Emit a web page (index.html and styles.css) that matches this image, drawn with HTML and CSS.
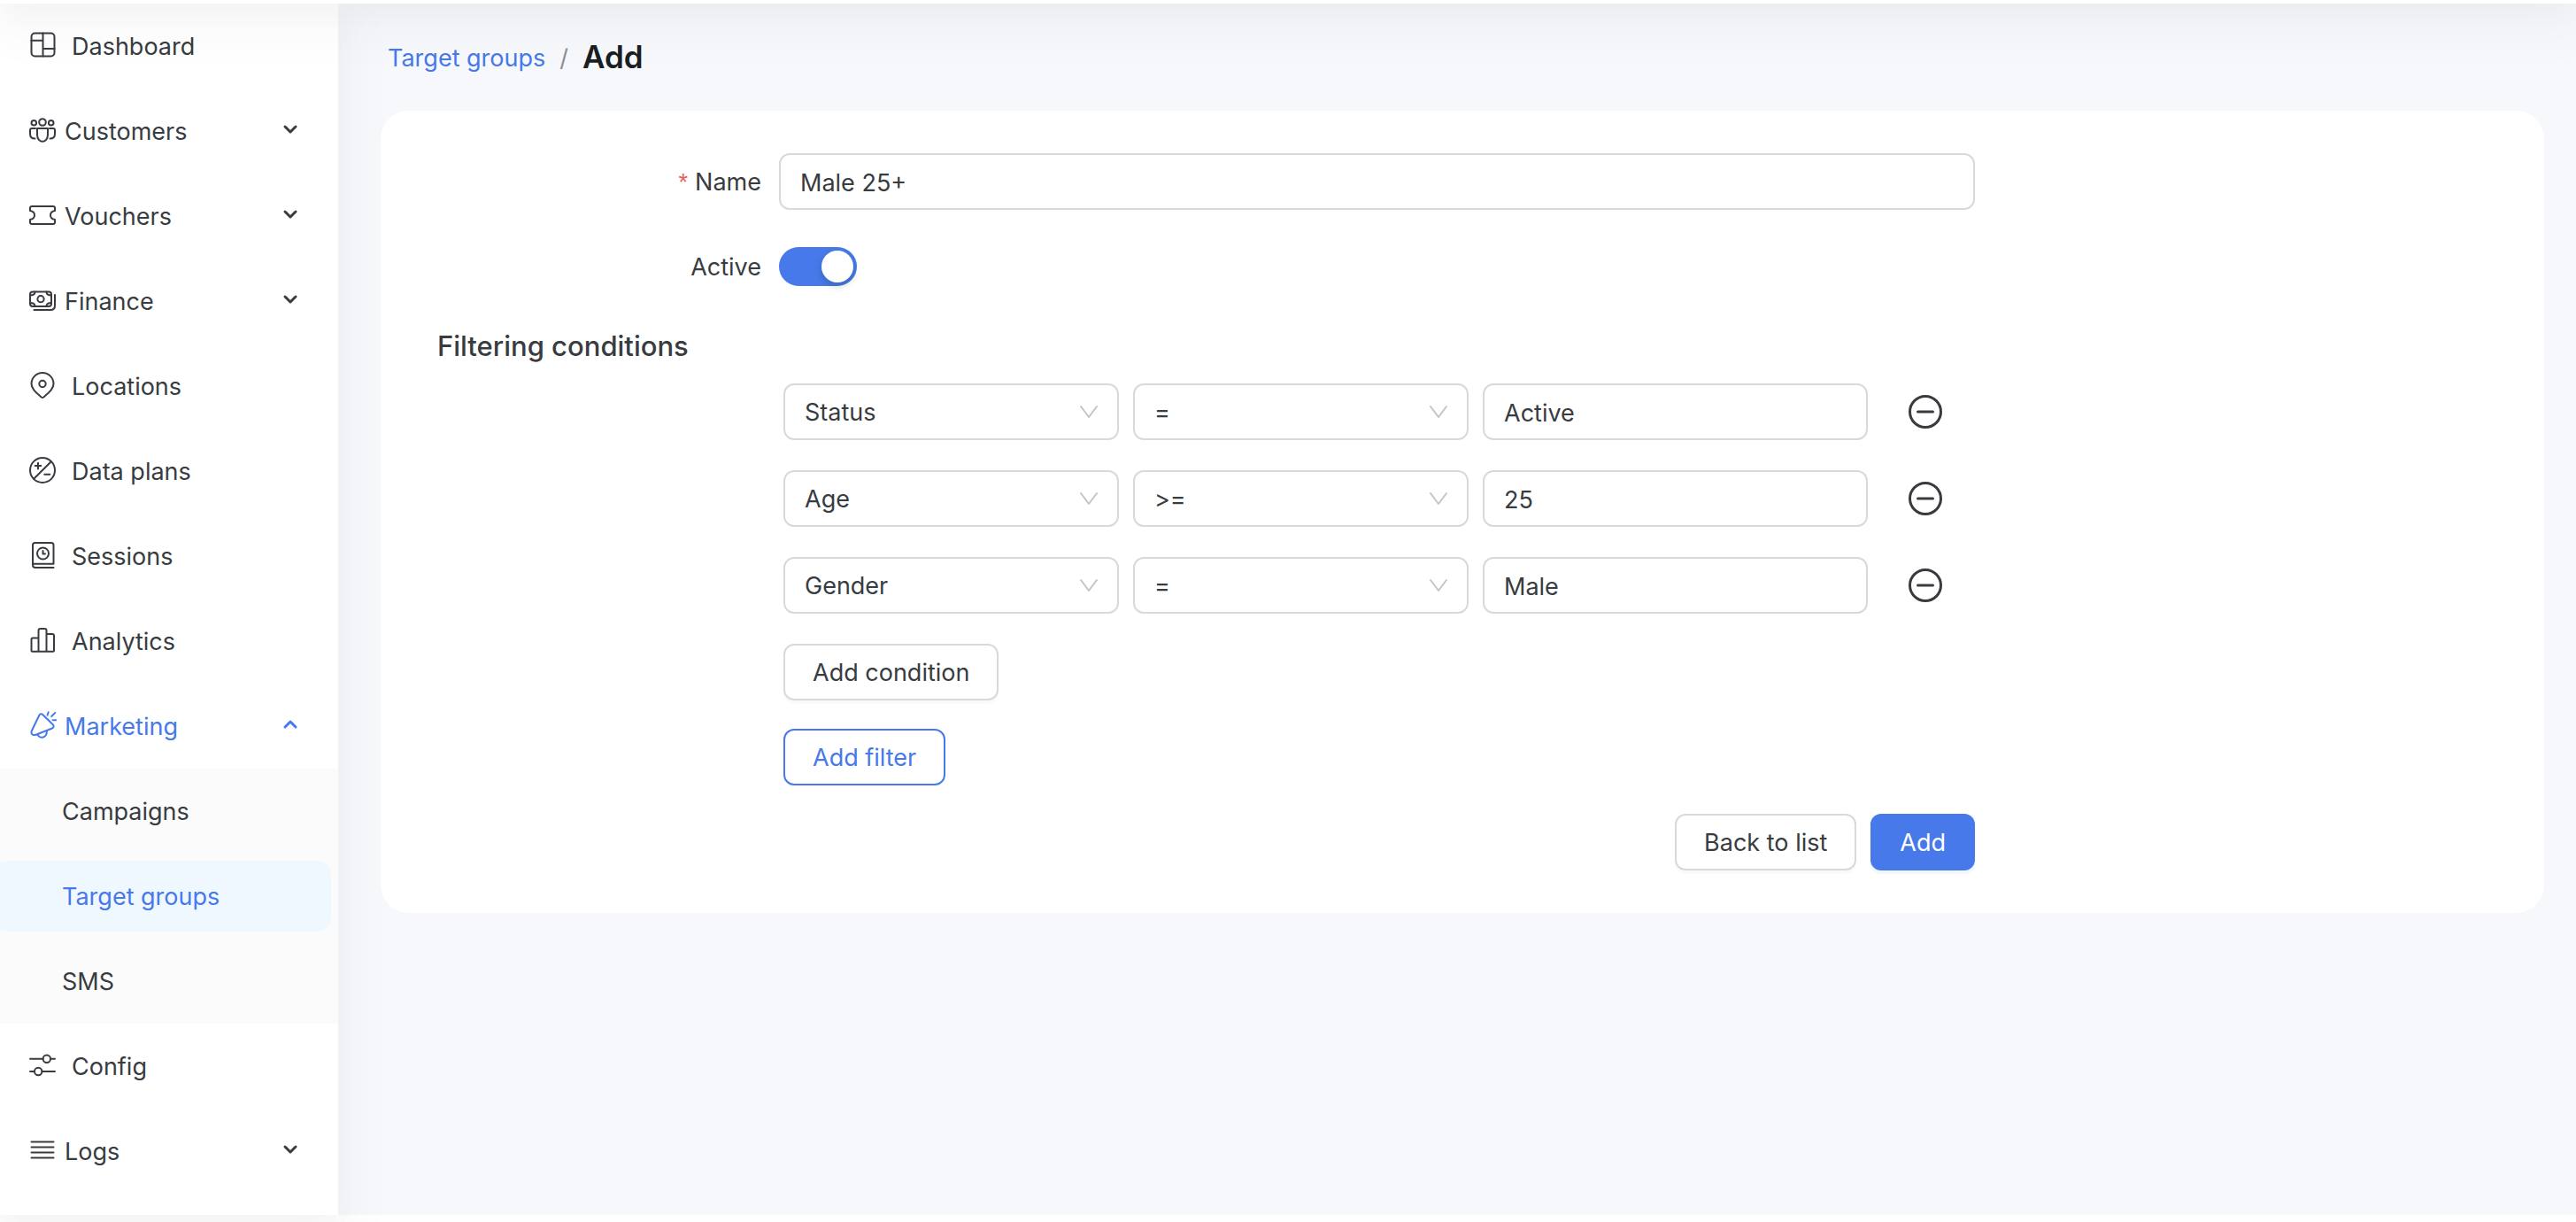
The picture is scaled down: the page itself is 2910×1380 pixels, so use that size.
FILE: index.html
```html
<!DOCTYPE html>
<html lang="en">
<head>
    <meta charset="UTF-8">
    <meta name="viewport" content="width=device-width, initial-scale=1.0">
    <title>Target groups / Add</title>
    <link rel="stylesheet" href="styles.css">
</head>
<body>
    <header class="topbar"></header>

    <div class="layout">
        <nav class="sidebar">
            <a href="#" class="menu-item">
                <svg class="menu-icon" viewBox="0 0 30 30"><rect x="2.5" y="1.5" width="26" height="26" rx="4"/><path d="M15.5 1.5v26M2.5 9.7h13M15.5 19h13"/></svg>
                <span>Dashboard</span>
            </a>
            <button type="button" class="menu-item menu-group">
                <svg class="menu-icon" viewBox="0 0 30 30"><circle cx="15" cy="6" r="3.8"/><circle cx="5.3" cy="6.8" r="2.8"/><circle cx="24.7" cy="6.8" r="2.8"/><path d="M9 13h12v7c0 5-3 7.8-6 7.8S9 25 9 20zM7 13H3q-2 0-2 2v4.5c0 3.5 2 5 5.5 5M23 13h4q2 0 2 2v4.5c0 3.5-2 5-5.5 5"/></svg>
                <span>Customers</span>
                <svg class="chevron" viewBox="0 0 16 10"><path d="M2 2l6 6 6-6"/></svg>
            </button>
            <button type="button" class="menu-item menu-group">
                <svg class="menu-icon" viewBox="0 0 30 30"><path d="M1 7q0-2 2-2h24q2 0 2 2v3c-3 .5-5 2.500-5 5s2 4.500 5 5v3q0 2-2 2H3q-2 0-2-2v-3c3-.5 5-2.500 5-5s-2-4.500-5-5z"/></svg>
                <span>Vouchers</span>
                <svg class="chevron" viewBox="0 0 16 10"><path d="M2 2l6 6 6-6"/></svg>
            </button>
            <button type="button" class="menu-item menu-group">
                <svg class="menu-icon" viewBox="0 0 30 30"><rect x="1" y="5.5" width="24" height="16.5" rx="3"/><circle cx="13" cy="13.7" r="3.6"/><path d="M6.5 5.5q0 4-5.5 4M19.5 5.5q0 4 5.5 4M6.5 22q0-4-5.5-4M19.5 22q0-4 5.5-4M29 9v12q0 5-5 5H5.5"/></svg>
                <span>Finance</span>
                <svg class="chevron" viewBox="0 0 16 10"><path d="M2 2l6 6 6-6"/></svg>
            </button>
            <a href="#" class="menu-item">
                <svg class="menu-icon" viewBox="0 0 30 30"><path d="M27.500 13.500C27.500 20 20 25.500 16.300 28.500q-1.300 1-2.600 0C10 25.500 2.500 20 2.500 13.500a12.500 12.500 0 0 1 25 0z"/><circle cx="15" cy="13.5" r="3.7"/></svg>
                <span>Locations</span>
            </a>
            <a href="#" class="menu-item">
                <svg class="menu-icon" viewBox="0 0 30 30"><circle cx="15" cy="15" r="14"/><path d="M5.200 24.800L24.800 5.200M10 6.800v6.600M6.700 10.100h6.600M17.300 19.700h6"/></svg>
                <span>Data plans</span>
            </a>
            <a href="#" class="menu-item">
                <svg class="menu-icon" viewBox="0 0 30 30"><path d="M27.500 24.700V3.500Q27.500 1 25 1H6.500Q4 1 4 3.500V26q0 3 3 3h20.500M4.500 24.700h23"/><circle cx="15.5" cy="13" r="6.5"/><path d="M15.500 10v3.500h2.500"/></svg>
                <span>Sessions</span>
            </a>
            <a href="#" class="menu-item">
                <svg class="menu-icon" viewBox="0 0 30 30"><path d="M10.500 27.800H3.500q-1 0-1-1V14q0-1.500 1.500-1.500h6.500zM10.500 27.800V4q0-2 2-2h5q2 0 2 2v23.800zM19.500 8H26q2 0 2 2v16.800q0 1-1 1h-7.500"/></svg>
                <span>Analytics</span>
            </a>
            <button type="button" class="menu-item menu-group menu-open">
                <svg class="menu-icon" viewBox="0 0 30 30"><path d="M11.300 3.700q1.800-2.600 4.200-.4L27 14.500q1.600 2.500-1 4L7.500 25.800q-5.500 1.400-5-3.800zM9.800 25.500c1.200 4.800 9.700 5 10.200-3.700M21.700.2l-1.200 3.500M29.300.9l-4.100 4.100M26.600 9.300h3.600"/></svg>
                <span>Marketing</span>
                <svg class="chevron" viewBox="0 0 16 10"><path d="M2 8l6-6 6 6"/></svg>
            </button>
            <div class="submenu">
                <a href="#" class="menu-item">Campaigns</a>
                <a href="#" class="menu-item selected">Target groups</a>
                <a href="#" class="menu-item">SMS</a>
            </div>
            <a href="#" class="menu-item">
                <svg class="menu-icon" viewBox="0 0 30 30"><path d="M1 7.800h14.500M24 7.800h5M1 22h5M14.500 22H29"/><circle cx="19.8" cy="7.8" r="4.2"/><circle cx="10.2" cy="22" r="4.2"/></svg>
                <span>Config</span>
            </a>
            <button type="button" class="menu-item menu-group">
                <svg class="menu-icon" viewBox="0 0 30 30"><path d="M2.500 5.500h25M2.500 11.500h25M2.500 17.500h25M2.500 23.500h25"/></svg>
                <span>Logs</span>
                <svg class="chevron" viewBox="0 0 16 10"><path d="M2 2l6 6 6-6"/></svg>
            </button>
        </nav>

        <main class="content">
            <div class="breadcrumb">
                <a href="#">Target groups</a>
                <span class="separator">/</span>
                <h1>Add</h1>
            </div>

            <form class="card">
                <div class="form-row">
                    <label for="name" class="required">Name</label>
                    <input type="text" id="name" class="control" value="Male 25+">
                </div>
                <div class="form-row">
                    <label for="active">Active</label>
                    <input type="checkbox" id="active" class="switch" checked>
                </div>

                <h2>Filtering conditions</h2>

                <!-- Filter rows -->
                <div class="form-row">
                    <div class="filters">
                        <div class="condition">
                            <div class="select">
                                <select class="control" aria-label="Field"><option>Status</option></select>
                                <svg viewBox="0 0 20 14"><path d="M1 1l9 12 9-12"/></svg>
                            </div>
                            <div class="select">
                                <select class="control" aria-label="Operator"><option>=</option></select>
                                <svg viewBox="0 0 20 14"><path d="M1 1l9 12 9-12"/></svg>
                            </div>
                            <input type="text" class="control" aria-label="Value" value="Active">
                            <button type="button" class="remove" aria-label="Remove condition">
                                <svg viewBox="0 0 38 38"><circle cx="19" cy="19" r="17.5"/><path d="M10.500 19h17"/></svg>
                            </button>
                        </div>
                        <div class="condition">
                            <div class="select">
                                <select class="control" aria-label="Field"><option>Age</option></select>
                                <svg viewBox="0 0 20 14"><path d="M1 1l9 12 9-12"/></svg>
                            </div>
                            <div class="select">
                                <select class="control" aria-label="Operator"><option>&gt;=</option></select>
                                <svg viewBox="0 0 20 14"><path d="M1 1l9 12 9-12"/></svg>
                            </div>
                            <input type="text" class="control" aria-label="Value" value="25">
                            <button type="button" class="remove" aria-label="Remove condition">
                                <svg viewBox="0 0 38 38"><circle cx="19" cy="19" r="17.5"/><path d="M10.500 19h17"/></svg>
                            </button>
                        </div>
                        <div class="condition">
                            <div class="select">
                                <select class="control" aria-label="Field"><option>Gender</option></select>
                                <svg viewBox="0 0 20 14"><path d="M1 1l9 12 9-12"/></svg>
                            </div>
                            <div class="select">
                                <select class="control" aria-label="Operator"><option>=</option></select>
                                <svg viewBox="0 0 20 14"><path d="M1 1l9 12 9-12"/></svg>
                            </div>
                            <input type="text" class="control" aria-label="Value" value="Male">
                            <button type="button" class="remove" aria-label="Remove condition">
                                <svg viewBox="0 0 38 38"><circle cx="19" cy="19" r="17.5"/><path d="M10.500 19h17"/></svg>
                            </button>
                        </div>
                        <button type="button" class="btn">Add condition</button>
                    </div>
                </div>
                <div class="form-row">
                    <div class="filters">
                        <button type="button" class="btn btn-outline">Add filter</button>
                    </div>
                </div>

                <div class="form-row">
                    <div class="actions">
                        <button type="button" class="btn">Back to list</button>
                        <button type="submit" class="btn btn-primary">Add</button>
                    </div>
                </div>
            </form>
        </main>
    </div>
</body>
</html>
```
FILE: styles.css
```css
* {
    box-sizing: border-box;
    margin: 0;
    padding: 0;
}

:root {
    --blue: #4779ea;
    --text: #383c40;
    --border: #d9d9d9;
    --shadow: 0 12px 32px 0 rgba(0, 0, 0, 0.02),
              0 18px 56px 16px rgba(0, 0, 0, 0.03);
}

body {
    font-family: Inter, 'Liberation Sans', sans-serif;
    font-size: 27px;
    line-height: 44px;
    color: var(--text);
    background: #fff;
}

a {
    color: var(--blue);
    text-decoration: none;
}

button,
input,
select {
    font: inherit;
    color: inherit;
}

button {
    cursor: pointer;
}

svg {
    flex: none;
    fill: none;
    stroke: currentColor;
    stroke-width: 2;
    stroke-linecap: round;
    stroke-linejoin: round;
    overflow: visible;
}

.topbar {
    position: relative;
    z-index: 2;
    height: 128px;
    margin-top: -124px;
    background: #fff;
    box-shadow: var(--shadow);
    pointer-events: none;
}

.layout {
    display: flex;
    min-height: calc(100vh - 12px);
    margin-bottom: 8px;
    background: #f6f8fc;
}

/* Sidebar */
.sidebar {
    width: 382px;
    flex: none;
    background: #fff;
    box-shadow: var(--shadow);
}

.menu-item {
    display: flex;
    align-items: center;
    gap: 18px;
    width: 382px;
    height: 80px;
    margin: 8px 8px 8px -8px;
    padding: 2px 38px 0 41px;
    border: 0;
    border-radius: 16px;
    background: none;
    color: var(--text);
    text-align: left;
}

.sidebar,
.submenu {
    display: flow-root;
}

.sidebar > .menu-item,
.submenu > .menu-item {
    margin-bottom: 16px;
}

.menu-group {
    gap: 10px;
}

.menu-open,
.selected {
    color: var(--blue);
}

.menu-icon {
    width: 30px;
    height: 30px;
    margin-bottom: 4px;
}

.chevron {
    width: 16px;
    height: 10px;
    margin-left: auto;
    margin-bottom: 6px;
    stroke-width: 3;
}

.submenu {
    margin: -8px 0 8px;
    background: #fbfbfb;
}

.submenu .menu-item {
    padding-left: 78px;
}

.submenu .menu-item:last-child {
    margin-bottom: 8px;
}

.selected {
    background: #f0f8ff;
}

/* Content */
.content {
    flex: 1;
    padding: 36px 36px 36px 48px;
}

.breadcrumb {
    display: flex;
    align-items: center;
    gap: 16px;
    height: 52px;
    padding-left: 8px;
}

.separator {
    color: #8c8e91;
}

h1 {
    padding-bottom: 4px;
    font-size: 35px;
    font-weight: 600;
    color: #1a1f23;
}

.card {
    position: relative;
    display: flex;
    flex-direction: column;
    gap: 32px;
    margin-top: 33px;
    padding: 48px 64px;
    border-radius: 32px;
    background: #fff;
}

.form-row {
    display: grid;
    grid-template-columns: 4fr 14fr 6fr;
    align-items: center;
    min-height: 64px;
}

.form-row > label {
    padding: 2px 20px 0 0;
    text-align: right;
}

.required::before {
    content: '*';
    margin-right: 8px;
    color: #e5615c;
    font-family: 'Liberation Sans', sans-serif;
}

.control {
    width: 100%;
    min-width: 0;
    height: 64px;
    padding: 2px 22px 0;
    border: 2px solid var(--border);
    border-radius: 12px;
    background: #fff;
    appearance: none;
}

.switch {
    width: 88px;
    height: 44px;
    padding: 4px;
    border-radius: 22px;
    background: var(--blue);
    appearance: none;
}

.switch::before {
    content: '';
    display: block;
    width: 36px;
    height: 36px;
    margin-left: auto;
    border-radius: 50%;
    background: #fff;
    box-shadow: 0 4px 8px rgba(0, 35, 11, 0.2);
}

h2 {
    margin: 4px 0 -12px;
    font-size: 31px;
    font-weight: 500;
    line-height: 44px;
}

.filters {
    grid-column: 2;
    display: grid;
    justify-items: start;
    gap: 34px;
    padding-left: 5px;
}

.condition {
    display: grid;
    grid-template-columns: 379fr 379fr 435fr 105fr;
    align-items: center;
    gap: 16px;
    width: 100%;
}

/* Arrow shares the grid cell with its select */
.select {
    display: grid;
    align-items: center;
}

.select > * {
    grid-area: 1 / 1;
}

.select svg {
    justify-self: end;
    width: 20px;
    height: 14px;
    margin-right: 24px;
    color: #c4c4c4;
    pointer-events: none;
}

.remove {
    width: 38px;
    height: 38px;
    margin-left: 30px;
    border: 0;
    background: none;
}

.remove svg {
    display: block;
    stroke-width: 3;
}

.btn {
    height: 64px;
    padding: 2px 31px 0;
    border: 2px solid var(--border);
    border-radius: 12px;
    background: #fff;
    box-shadow: 0 4px 0 rgba(0, 0, 0, 0.02);
}

.btn-outline {
    border-color: var(--blue);
    color: var(--blue);
    box-shadow: none;
}

.btn-primary {
    border-color: var(--blue);
    background: var(--blue);
    color: #fff;
    box-shadow: 0 4px 0 #f3f7ff;
}

.actions {
    grid-column: 2;
    display: flex;
    justify-content: flex-end;
    gap: 16px;
}
```
